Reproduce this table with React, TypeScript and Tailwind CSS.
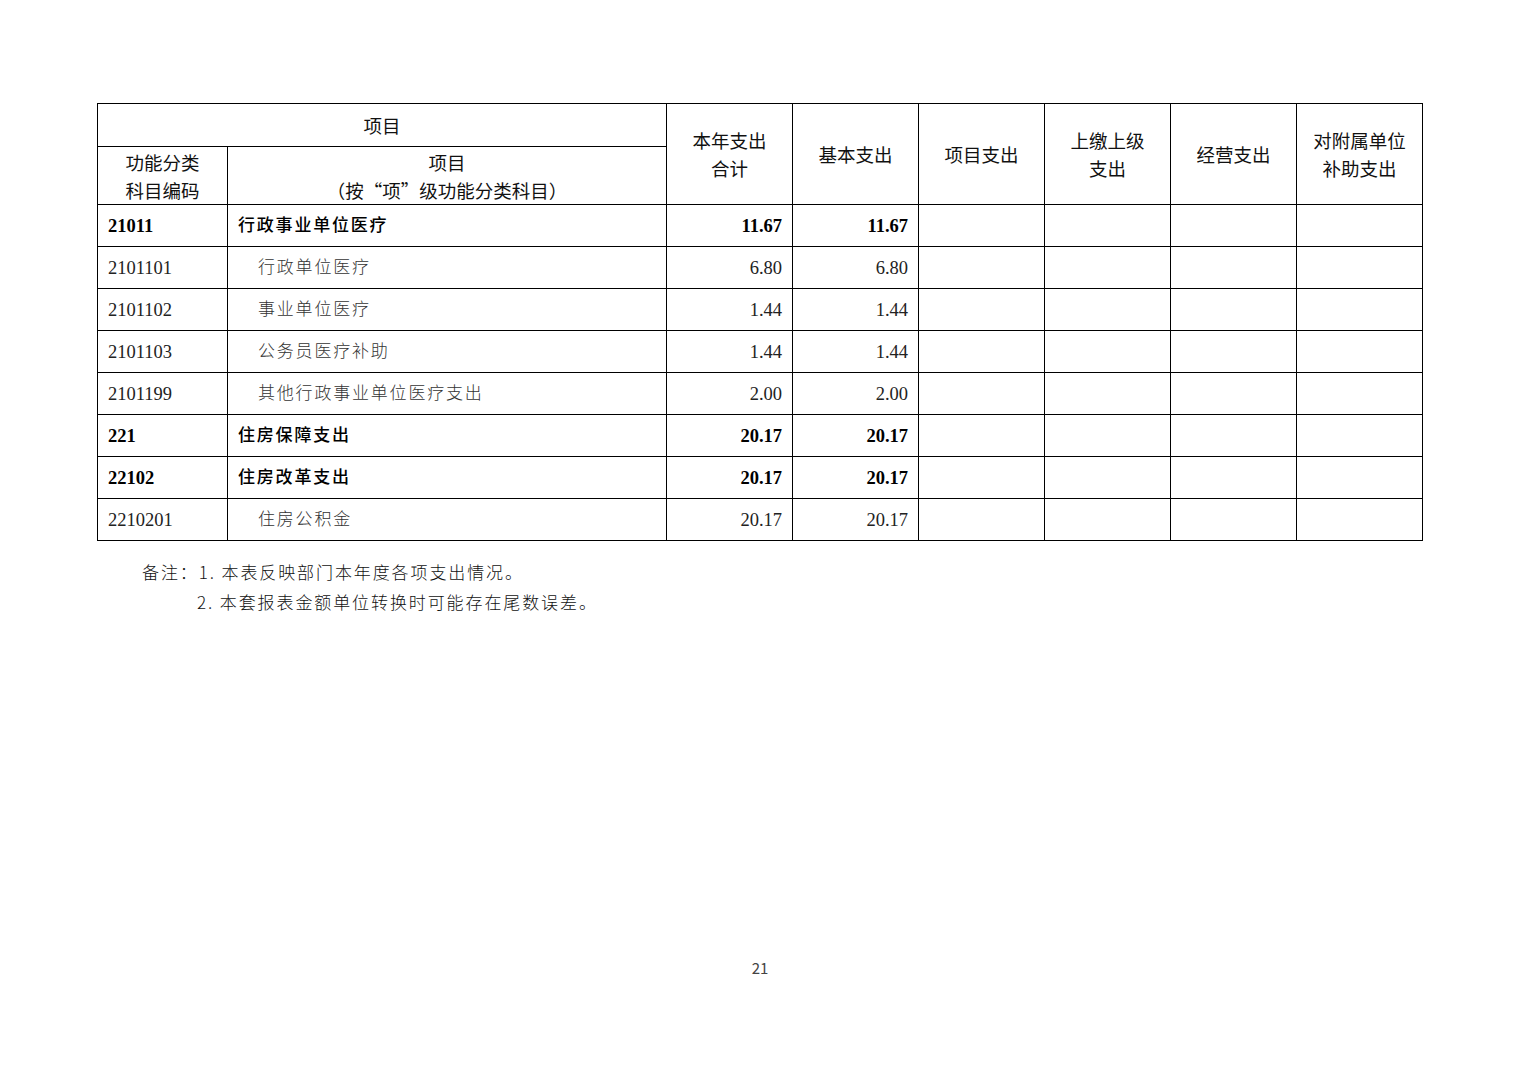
import React from "react";

type Row = {
  code: string;
  name: string;
  total: string;
  basic: string;
  bold?: boolean;
};

const rows: Row[] = [
  { code: "21011", name: "行政事业单位医疗", total: "11.67", basic: "11.67", bold: true },
  { code: "2101101", name: "行政单位医疗", total: "6.80", basic: "6.80" },
  { code: "2101102", name: "事业单位医疗", total: "1.44", basic: "1.44" },
  { code: "2101103", name: "公务员医疗补助", total: "1.44", basic: "1.44" },
  { code: "2101199", name: "其他行政事业单位医疗支出", total: "2.00", basic: "2.00" },
  { code: "221", name: "住房保障支出", total: "20.17", basic: "20.17", bold: true },
  { code: "22102", name: "住房改革支出", total: "20.17", basic: "20.17", bold: true },
  { code: "2210201", name: "住房公积金", total: "20.17", basic: "20.17" },
];

const serif = "font-['Liberation_Serif','Noto_Sans_CJK_SC',serif]";
const sans = "font-['Noto_Sans_CJK_SC',sans-serif]";
const cell = "border border-black p-0";

export default function App() {
  return (
    <div className="w-[1520px] h-[1074px] bg-white text-black flex flex-col">
      <div className="pt-[103px] pl-[97px]">
        <table className="table-fixed border-collapse w-[1325px]">
          <colgroup>
            <col className="w-[130px]" />
            <col className="w-[439px]" />
            <col className="w-[126px]" />
            <col className="w-[126px]" />
            <col className="w-[126px]" />
            <col className="w-[126px]" />
            <col className="w-[126px]" />
            <col className="w-[126px]" />
          </colgroup>
          <thead className={`${sans} text-[18.5px] leading-[28px] font-normal text-[#111]`}>
            <tr className="h-[43px]">
              <th colSpan={2} className={`${cell} font-normal text-center`}>
                项目
              </th>
              <th rowSpan={2} className={`${cell} font-normal text-center`}>
                本年支出
                <br />
                合计
              </th>
              <th rowSpan={2} className={`${cell} font-normal text-center`}>
                基本支出
              </th>
              <th rowSpan={2} className={`${cell} font-normal text-center`}>
                项目支出
              </th>
              <th rowSpan={2} className={`${cell} font-normal text-center`}>
                上缴上级
                <br />
                支出
              </th>
              <th rowSpan={2} className={`${cell} font-normal text-center`}>
                经营支出
              </th>
              <th rowSpan={2} className={`${cell} font-normal text-center`}>
                对附属单位
                <br />
                补助支出
              </th>
            </tr>
            <tr className="h-[58px]">
              <th className={`${cell} font-normal text-center`}>
                功能分类
                <br />
                科目编码
              </th>
              <th className={`${cell} font-normal text-center`}>
                项目
                <br />
                （按“项”级功能分类科目）
              </th>
            </tr>
          </thead>
          <tbody className="text-[18.5px]">
            {rows.map((r) => (
              <tr key={r.code} className="h-[42px]">
                <td className={`${cell} ${serif} pl-[10px] pt-[2px] ${r.bold ? "font-bold" : "text-[#222]"}`}>
                  {r.code}
                </td>
                <td
                  className={`${cell} ${sans} text-[17px] tracking-[1.8px] pb-[3px] ${
                    r.bold ? "pl-[10px] font-medium" : "pl-[30px] font-light text-[#333]"
                  }`}
                >
                  {r.name}
                </td>
                <td className={`${cell} ${serif} text-right pr-[10px] pt-[2px] ${r.bold ? "font-bold" : "text-[#222]"}`}>
                  {r.total}
                </td>
                <td className={`${cell} ${serif} text-right pr-[10px] pt-[2px] ${r.bold ? "font-bold" : "text-[#222]"}`}>
                  {r.basic}
                </td>
                <td className={cell}></td>
                <td className={cell}></td>
                <td className={cell}></td>
                <td className={cell}></td>
              </tr>
            ))}
          </tbody>
        </table>
      </div>

      <div className={`${sans} font-light text-[17px] tracking-[1.9px] leading-[30px] text-[#111] pt-[16px]`}>
        <div className="pl-[142px]">备注：1. 本表反映部门本年度各项支出情况。</div>
        <div className="pl-[197px]">2. 本套报表金额单位转换时可能存在尾数误差。</div>
      </div>

      <div className="flex-1" />
      <div className={`${sans} text-[15px] text-[#444] text-center pb-[95px]`}>21</div>
    </div>
  );
}
